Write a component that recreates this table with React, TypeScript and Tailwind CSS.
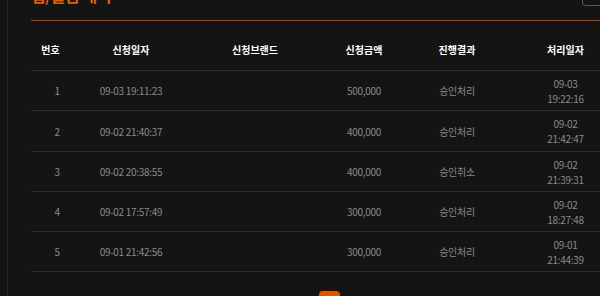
import React from "react";

const rows = [
  { no: "1", date: "09-03 19:11:23", amount: "500,000", result: "승인처리", d1: "09-03", d2: "19:22:16", h: "h-[40px]" },
  { no: "2", date: "09-02 21:40:37", amount: "400,000", result: "승인처리", d1: "09-02", d2: "21:42:47", h: "h-[41px]" },
  { no: "3", date: "09-02 20:38:55", amount: "400,000", result: "승인취소", d1: "09-02", d2: "21:39:31", h: "h-[40px]" },
  { no: "4", date: "09-02 17:57:49", amount: "300,000", result: "승인처리", d1: "09-02", d2: "18:27:48", h: "h-[40px]" },
  { no: "5", date: "09-01 21:42:56", amount: "300,000", result: "승인처리", d1: "09-01", d2: "21:44:39", h: "h-[40px]" },
];

const grid = "grid grid-cols-[39px_122px_126px_92px_94px_123px]";

export default function App() {
  return (
    <div
      className="w-[600px] h-[296px] overflow-hidden bg-[#141414] flex items-start"
      style={{ fontFamily: '"Noto Sans CJK KR", "Noto Sans", sans-serif' }}
    >
      <div className="w-[7px] shrink-0" />
      <div className="w-px h-[296px] shrink-0 bg-[#242424]" />
      <div className="shrink-0 w-[596px] ml-[23px] flex flex-col">
        <div className="h-[21px] shrink-0 border-b border-[#b24200] flex items-start">
          <div className="-mt-[15px] text-[16px] leading-[20px] font-bold text-[#e65c00] tracking-[-0.5px]">
            입/출금 내역
          </div>
          <div className="ml-auto mr-[17px] -mt-[18px] w-[28px] h-[24px] rounded-[4px] border border-[#5a5a5a]" />
        </div>
        <div className={`${grid} shrink-0 pt-[21px] pb-[12px] border-b border-[#2a2a2a] text-[10px] leading-[16px] font-bold text-white text-center`}>
          <div>번호</div>
          <div>신청일자</div>
          <div>신청브랜드</div>
          <div>신청금액</div>
          <div>진행결과</div>
          <div>처리일자</div>
        </div>
        {rows.map((r) => (
          <div
            key={r.no}
            className={`${grid} ${r.h} shrink-0 items-center border-b border-[#2a2a2a] text-[10px] leading-[15px] tracking-[-0.3px] text-[#8a8a8a] text-center`}
          >
            <div className="pl-[13px]">{r.no}</div>
            <div>{r.date}</div>
            <div></div>
            <div>{r.amount}</div>
            <div>{r.result}</div>
            <div className="flex flex-col items-center">
              <span>{r.d1}</span>
              <span>{r.d2}</span>
            </div>
          </div>
        ))}
        <div className="flex justify-center mt-[19px] shrink-0">
          <div className="w-[21px] h-[21px] rounded-[4px] bg-[#dd5700]" />
        </div>
      </div>
    </div>
  );
}
